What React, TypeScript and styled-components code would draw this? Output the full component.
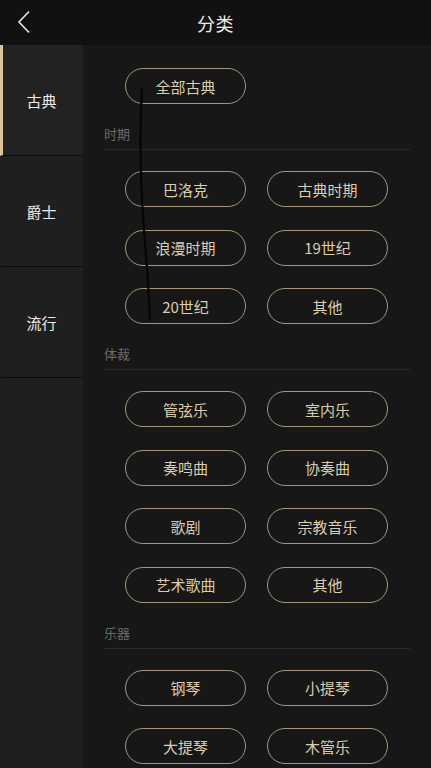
import styled, { createGlobalStyle } from 'styled-components'

const GlobalStyle = createGlobalStyle`
  html, body {
    margin: 0;
    padding: 0;
    background: #171717;
    overflow: hidden;
  }
  body {
    font-family: "Noto Sans CJK SC", "Noto Sans", sans-serif;
  }
`

const sections = [
  { title: '时期', items: ['巴洛克', '古典时期', '浪漫时期', '19世纪', '20世纪', '其他'] },
  { title: '体裁', items: ['管弦乐', '室内乐', '奏鸣曲', '协奏曲', '歌剧', '宗教音乐', '艺术歌曲', '其他'] },
  { title: '乐器', items: ['钢琴', '小提琴', '大提琴', '木管乐'] },
]

const tabs = ['古典', '爵士', '流行']

const App = () => {
  return (
    <Page>
      <GlobalStyle />
      <Header>
        <BackBtn>
          <svg width="14" height="24" viewBox="0 0 14 24">
            <path d="M12 1.5 L2 12 L12 22.5" fill="none" stroke="#e6e6e6" strokeWidth="1.6" />
          </svg>
        </BackBtn>
        <Title>分类</Title>
      </Header>
      <Main>
        <Sidebar>
          {tabs.map((t, i) => (
            <Tab key={t} $active={i === 0}>{t}</Tab>
          ))}
        </Sidebar>
        <Content>
          <PillGrid>
            <Pill>全部古典</Pill>
          </PillGrid>
          {sections.map((s) => (
            <Section key={s.title}>
              <SectionTitle>{s.title}</SectionTitle>
              <PillGrid>
                {s.items.map((it, i) => (
                  <Pill key={i}>{it}</Pill>
                ))}
              </PillGrid>
            </Section>
          ))}
        </Content>
      </Main>
      <Scribble width="431" height="768" viewBox="0 0 431 768">
        <path d="M142 88 C139 140 141 190 144 230 S149 290 150 320" fill="none" stroke="#050505" strokeWidth="2.2" strokeLinecap="round" />
      </Scribble>
    </Page>
  )
}

export default App

const Page = styled.div`
  position: relative;
  width: 431px;
  height: 768px;
  overflow: hidden;
  background: #171717;
`

const Header = styled.div`
  height: 45px;
  background: #111111;
  display: flex;
  align-items: center;
  justify-content: center;
  position: relative;
`

const BackBtn = styled.div`
  position: absolute;
  left: 17px;
  top: 10px;
  width: 14px;
  height: 24px;
`

const Title = styled.div`
  color: #ececec;
  font-size: 18px;
  letter-spacing: 0.5px;
`

const Main = styled.div`
  display: flex;
  height: 723px;
`

const Sidebar = styled.div`
  width: 83px;
  flex-shrink: 0;
  background: #1f1f1f;
  display: flex;
  flex-direction: column;
`

const Tab = styled.div<{ $active?: boolean }>`
  height: 111px;
  display: flex;
  align-items: center;
  justify-content: center;
  color: #ececec;
  font-size: 15px;
  background: ${(p) => (p.$active ? '#222222' : '#1f1f1f')};
  border-left: 3px solid ${(p) => (p.$active ? '#d9c39a' : 'transparent')};
  border-bottom: 1.5px solid #0b0b0b;
  box-sizing: border-box;
  padding-right: 3px;
`

const Content = styled.div`
  flex: 1;
  padding: 23px 21px 0;
  box-sizing: border-box;
`

const Section = styled.div`
  margin-top: 21px;
`

const SectionTitle = styled.div`
  color: #6a6a6a;
  font-size: 13px;
  line-height: 18px;
  padding-bottom: 6px;
  border-bottom: 1px solid #2a2a2a;
  margin-bottom: 21px;
`

const PillGrid = styled.div`
  display: grid;
  grid-template-columns: 121px 121px;
  column-gap: 21px;
  row-gap: 22.5px;
  padding: 0 21px;
`

const Pill = styled.div`
  height: 36px;
  box-sizing: border-box;
  border: 1.5px solid #a7977a;
  border-radius: 18px;
  display: flex;
  align-items: center;
  justify-content: center;
  color: #dccdb0;
  font-size: 15px;
`

const Scribble = styled.svg`
  position: absolute;
  left: 0;
  top: 0;
  pointer-events: none;
`
